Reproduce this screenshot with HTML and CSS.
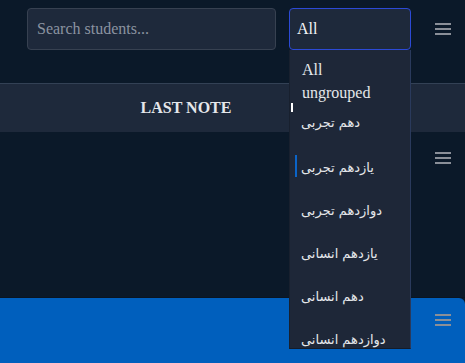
FILE: index.html
```html
<!DOCTYPE html>
<html>
<head>
<meta charset="utf-8">
<link rel="stylesheet" href="styles.css">
</head>
<body>
<div class="page">
  <div class="toolbar">
    <div class="search">Search students...</div>
    <div class="select">All</div>
    <div class="menu-btn"><span></span><span></span><span></span></div>
  </div>
  <div class="table">
    <div class="thead">
      <div class="th">LAST NOTE</div>
      <div class="th-rest"></div>
    </div>
    <div class="row">
      <div class="cell"></div>
      <div class="row-menu"><span></span><span></span><span></span></div>
    </div>
    <div class="row row-active">
      <div class="cell"></div>
      <div class="row-menu"><span></span><span></span><span></span></div>
    </div>
  </div>

  <div class="dropdown">
    <div class="opt opt-latin first">All</div>
    <div class="opt opt-latin">ungrouped</div>
    <div class="opt opt-fa top" dir="rtl">دهم تجربی</div>
    <div class="opt opt-fa current" dir="rtl">یازدهم تجربی</div>
    <div class="opt opt-fa" dir="rtl">دوازدهم تجربی</div>
    <div class="opt opt-fa" dir="rtl">یازدهم انسانی</div>
    <div class="opt opt-fa" dir="rtl">دهم انسانی</div>
    <div class="opt opt-fa" dir="rtl">دوازدهم انسانی</div>
  </div>
  <div class="caret"></div>
</div>
</body>
</html>
```

FILE: styles.css
```css
html, body {
  margin: 0;
  padding: 0;
  background: #0b1929;
  height: 100%;
  overflow: hidden;
}
.page {
  position: relative;
  font-family: "Liberation Serif", "DejaVu Sans", serif;
  font-size: 16px;
  color: #e5e7eb;
  min-height: 363px;
}
.toolbar {
  display: flex;
  align-items: center;
  padding: 8px 0 0 27px;
  height: 42px;
}
.search {
  box-sizing: border-box;
  width: 249px;
  height: 42px;
  background: #1e293b;
  border: 1px solid #374151;
  border-radius: 4px;
  color: #8b93a0;
  padding: 0 9px;
  display: flex;
  align-items: center;
}
.select {
  box-sizing: border-box;
  margin-left: 13px;
  width: 122px;
  height: 42px;
  background: #1e293b;
  border: 1px solid #2c4ad6;
  border-radius: 4px;
  color: #f3f4f6;
  padding: 0 7px;
  display: flex;
  align-items: center;
}
.menu-btn, .row-menu {
  display: flex;
  flex-direction: column;
  gap: 3px;
  width: 16px;
}
.menu-btn {
  margin-left: 24px;
  margin-top: -1px;
}
.menu-btn span, .row-menu span {
  display: block;
  height: 2px;
  background: #8a8f98;
}
.table {
  margin-top: 33px;
}
.thead {
  display: flex;
  height: 48px;
  background: #1e293b;
  border-top: 1px solid #334155;
}
.th {
  width: 372px;
  display: flex;
  align-items: center;
  justify-content: center;
  font-weight: bold;
  color: #e5e7eb;
}
.row {
  display: flex;
  justify-content: space-between;
  height: 165px;
  border-bottom: 1px solid #0a1522;
}
.row-menu {
  margin: 20px 14px 0 0;
}
.row-active {
  background: #005fbd;
  border-top-right-radius: 6px;
  height: 80px;
  border-bottom: none;
}
.row-active .row-menu {
  margin-top: 16px;
}
.dropdown {
  position: absolute;
  left: 289px;
  top: 50px;
  width: 122px;
  height: 299px;
  box-sizing: border-box;
  background: #1e2738;
  border-left: 1px solid #18202e;
  border-right: 1px solid #2a3a5c;
  border-bottom: 1px solid #141c2a;
  overflow: hidden;
}
.opt {
  padding: 0 0 0 12px;
  color: #e5e7eb;
  white-space: nowrap;
}
.opt-latin {
  line-height: 23px;
}
.opt-latin.first {
  margin-top: 8px;
}
.opt-fa {
  direction: rtl;
  text-align: left;
  font-family: "DejaVu Sans", sans-serif;
  font-size: 13px;
  height: 43px;
  line-height: 43px;
  padding: 0;
  margin-left: 11px;
  position: relative;
}
.opt-fa.top {
  height: 42px;
  line-height: 38px;
}
.opt-fa.current::before {
  content: "";
  position: absolute;
  left: -6px;
  top: 9px;
  width: 2px;
  height: 22px;
  background: #0b64c8;
}
.caret {
  position: absolute;
  left: 291px;
  top: 103px;
  width: 2px;
  height: 9px;
  background: #ffffff;
}
```
